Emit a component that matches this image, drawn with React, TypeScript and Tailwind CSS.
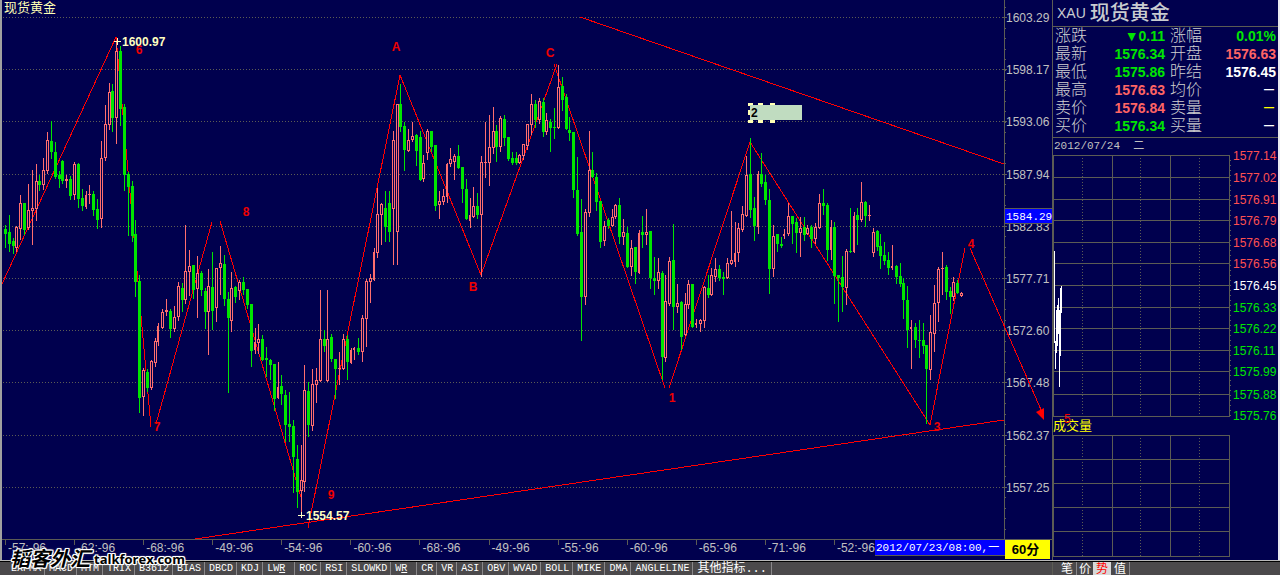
type Kind = 'up' | 'down' | 'fill';
type Candle = [x: number, high: number, top: number, bottom: number, low: number, kind: Kind];

const CANDLES: Candle[] = [
  [5, 225, 229, 234, 247, 'down'], [9, 215, 232, 244, 251, 'down'], [13, 238, 241, 246, 253, 'down'],
  [16, 226, 227, 248, 251, 'up'], [20, 195, 203, 229, 239, 'up'], [24, 203, 203, 230, 234, 'down'],
  [28, 184, 210, 228, 229, 'up'], [32, 170, 208, 211, 244, 'up'], [36, 164, 181, 209, 220, 'up'],
  [39, 175, 181, 185, 190, 'down'], [43, 158, 170, 185, 189, 'up'], [47, 132, 140, 171, 173, 'up'],
  [51, 121, 141, 152, 158, 'down'], [55, 142, 152, 177, 178, 'down'], [59, 171, 175, 179, 187, 'down'],
  [62, 160, 161, 181, 183, 'down'], [66, 175, 179, 181, 187, 'up'], [70, 176, 179, 196, 199, 'down'],
  [74, 162, 164, 195, 199, 'up'], [78, 163, 164, 199, 207, 'down'], [82, 189, 198, 206, 210, 'down'],
  [86, 191, 195, 207, 208, 'fill'], [89, 185, 194, 195, 203, 'up'], [93, 191, 194, 210, 215, 'down'],
  [97, 199, 209, 220, 228, 'down'], [101, 141, 158, 219, 227, 'up'], [105, 105, 124, 158, 160, 'up'],
  [109, 83, 92, 125, 129, 'up'], [112, 84, 91, 118, 131, 'down'], [116, 41, 51, 118, 143, 'up'],
  [120, 46, 51, 109, 125, 'down'], [124, 104, 107, 175, 190, 'down'], [128, 172, 174, 187, 235, 'down'],
  [132, 181, 186, 236, 241, 'down'], [135, 220, 234, 282, 296, 'down'], [139, 275, 281, 398, 412, 'down'],
  [143, 368, 370, 397, 415, 'up'], [147, 369, 372, 388, 391, 'down'], [151, 360, 361, 388, 389, 'up'],
  [155, 338, 341, 363, 366, 'up'], [158, 323, 326, 342, 345, 'fill'], [162, 309, 312, 328, 328, 'up'],
  [166, 299, 310, 312, 315, 'up'], [170, 309, 311, 329, 337, 'down'], [174, 306, 317, 329, 331, 'up'],
  [178, 282, 286, 317, 320, 'up'], [182, 283, 288, 300, 311, 'down'], [185, 225, 271, 300, 303, 'up'],
  [189, 250, 266, 272, 295, 'up'], [193, 265, 265, 290, 298, 'down'], [197, 256, 273, 289, 317, 'up'],
  [201, 271, 273, 290, 295, 'down'], [205, 288, 291, 312, 328, 'down'], [208, 269, 286, 312, 354, 'up'],
  [212, 252, 287, 311, 329, 'down'], [216, 268, 268, 308, 321, 'up'], [220, 246, 263, 268, 294, 'up'],
  [224, 255, 264, 299, 305, 'down'], [228, 292, 299, 318, 392, 'down'], [231, 272, 288, 321, 331, 'up'],
  [235, 286, 287, 297, 302, 'down'], [239, 280, 282, 291, 299, 'up'], [243, 277, 282, 290, 294, 'down'],
  [247, 289, 289, 305, 308, 'down'], [251, 304, 304, 351, 366, 'down'], [255, 328, 342, 350, 353, 'fill'],
  [258, 324, 339, 343, 353, 'up'], [262, 335, 339, 360, 360, 'down'], [266, 347, 358, 360, 376, 'down'],
  [270, 359, 360, 365, 379, 'down'], [274, 364, 364, 399, 410, 'down'], [278, 362, 387, 398, 398, 'fill'],
  [281, 375, 386, 394, 404, 'down'], [285, 390, 395, 425, 441, 'down'], [289, 392, 424, 427, 441, 'down'],
  [293, 420, 426, 457, 492, 'down'], [297, 445, 459, 492, 507, 'down'], [301, 445, 480, 491, 515, 'up'],
  [304, 365, 390, 482, 491, 'up'], [308, 382, 391, 425, 436, 'down'], [312, 369, 384, 426, 430, 'up'],
  [316, 368, 380, 385, 402, 'up'], [320, 290, 339, 381, 381, 'up'], [324, 330, 339, 346, 351, 'down'],
  [327, 290, 339, 381, 381, 'up'], [331, 334, 337, 359, 361, 'down'], [335, 359, 359, 369, 398, 'down'],
  [339, 352, 368, 369, 384, 'up'], [343, 334, 339, 369, 369, 'up'], [347, 335, 339, 362, 379, 'down'],
  [351, 348, 350, 363, 363, 'fill'], [354, 347, 348, 350, 359, 'fill'], [358, 338, 348, 352, 354, 'down'],
  [362, 315, 318, 352, 361, 'up'], [366, 279, 281, 319, 346, 'up'], [370, 274, 278, 282, 302, 'up'],
  [374, 248, 252, 280, 280, 'fill'], [377, 188, 214, 253, 257, 'up'], [381, 203, 204, 215, 244, 'up'],
  [385, 191, 208, 227, 241, 'down'], [389, 191, 203, 232, 241, 'down'], [393, 131, 140, 209, 264, 'up'],
  [397, 104, 104, 232, 264, 'up'], [400, 84, 104, 127, 131, 'down'], [404, 122, 126, 150, 170, 'down'],
  [408, 129, 140, 151, 151, 'up'], [412, 122, 136, 140, 141, 'up'], [416, 134, 135, 151, 165, 'down'],
  [420, 131, 137, 180, 180, 'down'], [423, 155, 163, 179, 181, 'up'], [427, 129, 131, 153, 159, 'up'],
  [431, 131, 131, 147, 151, 'down'], [435, 145, 145, 206, 210, 'down'], [439, 191, 201, 205, 218, 'up'],
  [443, 189, 196, 202, 204, 'up'], [447, 163, 164, 197, 202, 'fill'], [450, 148, 159, 164, 166, 'up'],
  [454, 154, 156, 162, 179, 'up'], [458, 145, 156, 168, 168, 'down'], [462, 167, 167, 189, 202, 'down'],
  [466, 179, 189, 219, 219, 'down'], [470, 198, 215, 221, 227, 'fill'], [473, 187, 206, 217, 217, 'up'],
  [477, 193, 206, 215, 218, 'down'], [481, 156, 162, 215, 276, 'up'], [485, 122, 162, 163, 177, 'up'],
  [489, 115, 147, 163, 185, 'up'], [493, 107, 131, 148, 153, 'up'], [496, 125, 131, 147, 161, 'down'],
  [500, 116, 118, 147, 151, 'up'], [504, 115, 119, 138, 145, 'down'], [508, 137, 137, 159, 160, 'down'],
  [512, 152, 158, 163, 164, 'down'], [516, 152, 158, 163, 164, 'down'], [519, 154, 155, 163, 163, 'up'],
  [523, 144, 144, 156, 159, 'up'], [527, 124, 124, 146, 149, 'up'], [531, 94, 104, 125, 134, 'up'],
  [535, 100, 104, 120, 127, 'down'], [539, 98, 101, 120, 123, 'up'], [543, 98, 102, 132, 136, 'down'],
  [546, 113, 120, 132, 134, 'up'], [550, 119, 122, 128, 151, 'down'], [554, 108, 127, 128, 138, 'down'],
  [558, 65, 87, 128, 128, 'up'], [562, 77, 86, 100, 110, 'down'], [566, 94, 97, 129, 129, 'down'],
  [569, 117, 130, 133, 140, 'down'], [573, 132, 132, 190, 197, 'down'], [577, 157, 190, 234, 235, 'down'],
  [581, 199, 232, 297, 340, 'down'], [585, 209, 212, 297, 304, 'up'], [589, 131, 170, 213, 216, 'up'],
  [592, 152, 170, 177, 177, 'down'], [596, 173, 177, 202, 210, 'down'], [600, 201, 201, 242, 247, 'down'],
  [604, 221, 226, 241, 245, 'up'], [608, 218, 220, 226, 228, 'down'], [612, 209, 217, 226, 226, 'up'],
  [615, 204, 205, 217, 218, 'up'], [619, 198, 205, 237, 243, 'down'], [623, 219, 232, 237, 244, 'up'],
  [627, 227, 233, 267, 267, 'down'], [631, 240, 248, 267, 275, 'up'], [635, 247, 247, 272, 283, 'down'],
  [639, 230, 233, 273, 273, 'fill'], [642, 216, 232, 235, 247, 'down'], [646, 209, 232, 235, 244, 'up'],
  [650, 231, 231, 278, 288, 'down'], [654, 257, 278, 281, 294, 'down'], [658, 258, 272, 281, 288, 'up'],
  [662, 271, 273, 357, 379, 'down'], [665, 275, 301, 358, 361, 'up'], [669, 257, 261, 304, 305, 'up'],
  [673, 224, 260, 307, 329, 'down'], [677, 284, 303, 307, 312, 'up'], [681, 301, 302, 337, 349, 'down'],
  [685, 293, 304, 335, 335, 'up'], [688, 280, 284, 305, 308, 'up'], [692, 284, 284, 327, 327, 'down'],
  [696, 319, 323, 325, 327, 'fill'], [700, 319, 320, 324, 331, 'up'], [704, 286, 287, 321, 327, 'up'],
  [708, 275, 288, 295, 297, 'down'], [711, 268, 275, 295, 295, 'up'], [715, 258, 269, 277, 281, 'up'],
  [719, 265, 269, 278, 280, 'down'], [723, 272, 277, 279, 294, 'down'], [727, 258, 263, 278, 278, 'up'],
  [731, 211, 260, 264, 264, 'up'], [735, 222, 253, 262, 266, 'fill'], [738, 223, 228, 253, 261, 'up'],
  [742, 206, 214, 230, 231, 'up'], [746, 156, 175, 216, 216, 'up'], [750, 138, 174, 210, 217, 'down'],
  [754, 197, 208, 226, 240, 'down'], [758, 171, 174, 227, 233, 'fill'], [761, 153, 174, 184, 186, 'down'],
  [765, 175, 182, 200, 204, 'down'], [769, 189, 200, 269, 293, 'down'], [773, 225, 236, 269, 276, 'up'],
  [777, 234, 234, 244, 251, 'down'], [781, 237, 244, 246, 247, 'down'], [784, 229, 234, 236, 238, 'fill'],
  [788, 203, 216, 234, 235, 'up'], [792, 216, 216, 224, 243, 'down'], [796, 218, 222, 233, 252, 'down'],
  [800, 217, 228, 233, 256, 'up'], [804, 217, 227, 235, 240, 'down'], [807, 225, 228, 234, 234, 'up'],
  [811, 225, 227, 239, 247, 'down'], [815, 223, 227, 239, 243, 'up'], [819, 194, 203, 228, 228, 'up'],
  [823, 189, 203, 206, 214, 'down'], [827, 203, 205, 250, 260, 'down'], [831, 220, 227, 250, 259, 'fill'],
  [834, 222, 227, 276, 303, 'down'], [838, 275, 275, 278, 321, 'down'], [842, 256, 277, 287, 311, 'down'],
  [846, 249, 251, 288, 304, 'up'], [850, 208, 251, 252, 252, 'down'], [854, 212, 216, 252, 252, 'fill'],
  [857, 208, 215, 220, 244, 'down'], [861, 182, 202, 220, 221, 'up'], [865, 201, 202, 216, 226, 'down'],
  [869, 205, 215, 216, 220, 'up'], [873, 228, 232, 253, 256, 'up'], [877, 230, 231, 247, 250, 'down'],
  [880, 234, 246, 256, 268, 'down'], [884, 242, 255, 261, 264, 'down'], [888, 252, 260, 268, 274, 'down'],
  [892, 245, 266, 268, 269, 'fill'], [896, 265, 266, 277, 283, 'down'], [900, 263, 276, 284, 286, 'down'],
  [903, 278, 283, 300, 318, 'down'], [907, 286, 300, 330, 347, 'down'], [911, 320, 327, 329, 368, 'fill'],
  [915, 323, 327, 340, 347, 'down'], [919, 320, 340, 341, 357, 'down'], [923, 323, 340, 346, 353, 'down'],
  [926, 345, 345, 369, 423, 'down'], [930, 315, 332, 370, 379, 'up'], [934, 285, 303, 334, 351, 'up'],
  [938, 267, 269, 303, 321, 'up'], [942, 252, 268, 269, 294, 'up'], [946, 265, 267, 292, 299, 'down'],
  [950, 287, 291, 297, 313, 'down'], [953, 277, 282, 297, 300, 'up'], [957, 280, 283, 293, 293, 'down'],
  [961, 292, 293, 296, 296, 'up'],
];

const PRICE_LEVELS = [
  { y: 17, label: '1603.29' },
  { y: 69, label: '1598.17' },
  { y: 121, label: '1593.06' },
  { y: 174, label: '1587.94' },
  { y: 226, label: '1582.83' },
  { y: 278, label: '1577.71' },
  { y: 330, label: '1572.60' },
  { y: 382, label: '1567.48' },
  { y: 435, label: '1562.37' },
  { y: 487, label: '1557.25' },
];

const WAVE_LINES = [
  '2,284 116,37 151,427',
  '156,424 212,222',
  '220,221 301,497',
  '308,528 400,75 481,275 557,64',
  '554,64 665,388',
  '669,388 750,142 930,425 965,248',
  '970,248 1042,412',
];

const TREND_LINES = ['195,539 1004,420', '580,17 1004,164'];

const WAVE_LABELS = [
  { x: 139, y: 54, text: '6' },
  { x: 157, y: 431, text: '7' },
  { x: 246, y: 216, text: '8' },
  { x: 331, y: 499, text: '9' },
  { x: 396, y: 51, text: 'A' },
  { x: 473, y: 291, text: 'B' },
  { x: 550, y: 57, text: 'C' },
  { x: 672, y: 402, text: '1' },
  { x: 937, y: 431, text: '3' },
  { x: 971, y: 248, text: '4' },
];

const HANDLES = [
  [748, 103], [758, 103], [770, 103],
  [748, 120], [758, 120], [770, 120],
];

const TIMES = [
  '-57:-96', '-62:-96', '-68:-96', '-49:-96', '-54:-96', '-60:-96', '-68:-96',
  '-49:-96', '-55:-96', '-60:-96', '-65:-96', '-71:-96', '-52:-96',
];

const QUOTES = [
  { a: '涨跌', av: '▼0.11', ac: 'text-[#00e600]', b: '涨幅', bv: '0.01%', bc: 'text-[#00e600]' },
  { a: '最新', av: '1576.34', ac: 'text-[#00e600]', b: '开盘', bv: '1576.63', bc: 'text-[#ff6464]' },
  { a: '最低', av: '1575.86', ac: 'text-[#00e600]', b: '昨结', bv: '1576.45', bc: 'text-white' },
  { a: '最高', av: '1576.63', ac: 'text-[#ff6464]', b: '均价', bv: '—', bc: 'text-white' },
  { a: '卖价', av: '1576.84', ac: 'text-[#ff6464]', b: '卖量', bv: '—', bc: 'text-[#ffff00]' },
  { a: '买价', av: '1576.34', ac: 'text-[#00e600]', b: '买量', bv: '—', bc: 'text-white' },
];

const TICK_LEVELS = [
  { y: 155, label: '1577.14', color: '#ff5050' },
  { y: 177, label: '1577.02', color: '#ff5050' },
  { y: 199, label: '1576.91', color: '#ff5050' },
  { y: 220, label: '1576.79', color: '#ff5050' },
  { y: 242, label: '1576.68', color: '#ff5050' },
  { y: 263, label: '1576.56', color: '#ff5050' },
  { y: 285, label: '1576.45', color: '#ffffff' },
  { y: 307, label: '1576.33', color: '#00e600' },
  { y: 328, label: '1576.22', color: '#00e600' },
  { y: 350, label: '1576.11', color: '#00e600' },
  { y: 371, label: '1575.99', color: '#00e600' },
  { y: 394, label: '1575.88', color: '#00e600' },
  { y: 415, label: '1575.76', color: '#00e600' },
];

// x, top, bottom of each one pixel column of the tick line
const TICKS = [
  [1054, 251, 343], [1055, 341, 369], [1056, 310, 353], [1057, 305, 346],
  [1058, 298, 334], [1059, 310, 387], [1060, 288, 356], [1061, 286, 313],
];

const INDICATORS = [
  'EXPMA', 'MACD', 'MTM', 'TRIX', 'B3612', 'BIAS', 'DBCD', 'KDJ', 'LW&R', 'ROC', 'RSI', 'SLOWKD',
  'W&R', 'CR', 'VR', 'ASI', 'OBV', 'WVAD', 'BOLL', 'MIKE', 'DMA', 'ANGLELINE',
];

const GRID = '#5c5c54';
const SANS = '"Liberation Sans", "Noto Sans CJK SC", sans-serif';
const MONO = '"Liberation Mono", "Noto Sans CJK SC", monospace';

function CandleMark({ candle }: { candle: Candle }) {
  const [x, high, top, bottom, low, kind] = candle;
  const color = kind === 'down' ? '#00e600' : '#ff6e6e';
  const height = Math.max(bottom - top, 1);

  return (
    <g>
      <rect x={x} y={high} width={1} height={low - high + 1} fill={color} />
      {kind === 'up' && height > 2 ? (
        <rect x={x - 0.5} y={top + 0.5} width={2} height={height - 1} fill="#00004e" stroke={color} />
      ) : (
        <rect x={x - 1} y={top} width={kind === 'fill' ? 2 : 3} height={height} fill={color} />
      )}
    </g>
  );
}

function PriceChart() {
  return (
    <svg viewBox="2 0 1050 540" className="block w-full" role="img" aria-label="现货黄金 60分">
      <g shapeRendering="crispEdges">
        {PRICE_LEVELS.map(({ y }) => (
          <g key={y} stroke={GRID}>
            <line x1={3} x2={1004} y1={y + 0.5} y2={y + 0.5} strokeDasharray="1 2" />
            <line x1={1002} x2={1007} y1={y + 0.5} y2={y + 0.5} />
          </g>
        ))}
        {Array.from({ length: 51 }, (_, i) => (
          <rect key={i} x={1005} y={Math.round(7 + i * 10.43)} width={1} height={1} fill={GRID} />
        ))}
        <path d="M1004.5 0V540M2 539.5H1052" stroke={GRID} fill="none" />
      </g>

      {PRICE_LEVELS.map(({ y, label }) => (
        <text key={y} x={1006} y={y + 5} fontSize={12} fontFamily={SANS} fill="#c0c0c0">
          {label}
        </text>
      ))}

      {/* Waves and trend channel */}
      <g fill="none" stroke="#ff0000" shapeRendering="crispEdges">
        {WAVE_LINES.map((points) => (
          <polyline key={points} points={points} />
        ))}
      </g>

      <g shapeRendering="crispEdges">
        {CANDLES.map((candle) => (
          <CandleMark key={candle[0]} candle={candle} />
        ))}
      </g>

      <g fill="none" stroke="#ff0000" shapeRendering="crispEdges">
        {TREND_LINES.map((points) => (
          <polyline key={points} points={points} />
        ))}
      </g>
      <polygon points="1036,412 1044,408 1044,420" fill="#ff0000" />

      <g fontSize={12} fontWeight="bold" fontFamily={SANS} fill="#f00000" textAnchor="middle">
        {WAVE_LABELS.map(({ x, y, text }) => (
          <text key={text} x={x} y={y}>
            {text}
          </text>
        ))}
      </g>

      {/* High and low of the visible range */}
      <path d="M114 41.5H121M117.5 38V45M298 515.5H305M301.5 512V518" stroke="#ffffc0" shapeRendering="crispEdges" />
      <g fontSize={12} fontWeight="bold" fontFamily={SANS} fill="#ffffc0">
        <text x={122} y={46}>1600.97</text>
        <text x={306} y={520}>1554.57</text>
      </g>

      {/* Wave label being edited */}
      <g fill="#ffffb4" shapeRendering="crispEdges">
        {HANDLES.map(([x, y]) => (
          <rect key={`${x}-${y}`} x={x} y={y} width={5} height={3} />
        ))}
        <rect x={748} y={110} width={5} height={5} />
      </g>
      <foreignObject x={750} y={105} width={52} height={15}>
        <input
          aria-label="标注"
          defaultValue="2"
          className="block h-[15px] w-full bg-[#c0dcc0] px-px text-xs font-bold leading-none text-black outline-none"
        />
      </foreignObject>

      <rect x={1005} y={208} width={47} height={16} fill={GRID} />
      <rect x={1005} y={209} width={47} height={14} fill="#0000ff" />
      <text x={1006} y={220} fontSize={11} fontFamily={MONO} fill="#ffffff">
        1584.29
      </text>
    </svg>
  );
}

function TimeAxis() {
  return (
    <div className="flex h-5 items-start">
      <div className="grid flex-1 grid-cols-[repeat(12,69fr)_41fr] pl-[3px]">
        {TIMES.map((time, i) => (
          <span key={i} className="relative overflow-hidden pl-[3px] text-xs leading-4 text-[#c0c0c0]">
            <i className="absolute left-0 top-0 h-[5px] w-px bg-[#5c5c54]" />
            {time}
          </span>
        ))}
      </div>
      <span className="h-4 w-[130px] overflow-hidden whitespace-nowrap border-b border-[#5c5c54] bg-[#0000ff] px-px font-[Liberation_Mono,Noto_Sans_CJK_SC,monospace] text-[11px] leading-4 text-white">
        2012/07/23/08:00,一
      </span>
      <button className="mr-0.5 h-[19px] w-[45px] bg-[#ffff00] pr-1 text-[13px] font-bold leading-[19px] text-black">
        60分
      </button>
    </div>
  );
}

function GridBox({ top, lines }: { top: number; lines: number[] }) {
  const bottom = lines[lines.length - 1];
  return (
    <g stroke={GRID} fill="none" shapeRendering="crispEdges">
      {lines.map((y) => (
        <line key={y} x1={1053} x2={1229} y1={y + 0.5} y2={y + 0.5} />
      ))}
      {[1053, 1112, 1170, 1229].map((x) => (
        <line key={x} x1={x + 0.5} x2={x + 0.5} y1={top} y2={bottom + 1} />
      ))}
      {[1082, 1140, 1199].map((x) => (
        <line key={x} x1={x + 0.5} x2={x + 0.5} y1={top} y2={bottom} strokeDasharray="1 2" />
      ))}
    </g>
  );
}

function QuotePanel() {
  return (
    <aside className="w-[228px] shrink-0 border-l border-r-2 border-l-[#5c5c54] border-r-[#e8e8f0]">
      <h1 className="flex h-[27px] items-center gap-1 border-b border-[#5c5c54] pl-1 text-[#c8ccd0]">
        <span className="text-sm">XAU</span>
        <span className="text-xl font-medium leading-6">现货黄金</span>
      </h1>

      <div className="border-b border-[#5c5c54] pb-0.5">
        <table className="w-full table-fixed border-collapse">
          <colgroup>
            <col className="w-[36px]" />
            <col className="w-[76px]" />
            <col className="w-[40px]" />
            <col />
          </colgroup>
          <tbody>
            {QUOTES.map((q) => (
              <tr key={q.a} className="h-[18px] text-sm leading-[18px]">
                <th className="whitespace-nowrap p-0 pl-0.5 text-left text-base font-light leading-[18px] text-[#d0d0d0]">{q.a}</th>
                <td className={`p-0 text-right font-bold leading-[18px] ${q.ac}`}>{q.av}</td>
                <th className="whitespace-nowrap p-0 pl-[5px] text-left text-base font-light leading-[18px] text-[#d0d0d0]">{q.b}</th>
                <td className={`p-0 pr-0.5 text-right font-bold leading-[18px] ${q.bc}`}>
                  {q.bv === '—' ? <span className="block pr-0.5 text-[10px] leading-[18px]">—</span> : q.bv}
                </td>
              </tr>
            ))}
          </tbody>
        </table>
      </div>

      <p className="h-[17px] whitespace-pre pl-px font-[Liberation_Mono,Noto_Sans_CJK_SC,monospace] text-[11px] leading-[17px] text-[#c0c0c0]">
        2012/07/24  二
      </p>

      <svg viewBox="1053 155 225 262" className="block w-full overflow-visible" role="img" aria-label="分时走势">
        <GridBox top={155} lines={[155, 177, 199, 220, 242, 263, 285, 307, 328, 350, 371, 394, 416]} />
        <line x1={1230.5} x2={1230.5} y1={160} y2={416} stroke={GRID} strokeDasharray="1 4" shapeRendering="crispEdges" />
        {TICKS.map(([x, top, bottom]) => (
          <rect key={x} x={x} y={top} width={1} height={bottom - top} fill="#ffffff" />
        ))}
        {TICK_LEVELS.map(({ y, label, color }) => (
          <text key={y} x={1233} y={y + 5} fontSize={12} fontFamily={SANS} fill={color}>
            {label}
          </text>
        ))}
      </svg>

      <h2 className="relative h-[18px] text-[13px] leading-[18px] text-[#ffff00]">
        成交量
        <span className="absolute -top-1 left-[11px] text-xs leading-3 text-[#f00000]">5</span>
      </h2>
      <svg viewBox="1053 435 225 122" className="block w-full" role="img" aria-label="成交量">
        <GridBox top={435} lines={[435, 459, 483, 507, 531, 556]} />
      </svg>
    </aside>
  );
}

function IndicatorBar() {
  return (
    <footer className="flex h-[13px] bg-[#4b494b] text-white">
      <div className="flex min-w-0 flex-1 pl-[7px] font-[Liberation_Mono,Noto_Sans_CJK_SC,monospace] text-[10px] leading-3">
        {INDICATORS.map((name) => {
          const [head, hot] = name.split('&');
          return (
            <button key={name} className="shrink-0 whitespace-pre border-r border-[#8a888a] pl-1 pr-[3px]">
              {head}
              {hot && (
                <>
                  <u>{hot}</u>{' '}
                </>
              )}
            </button>
          );
        })}
        <button className="shrink-0 whitespace-pre border-r border-[#8a888a] pl-1 pr-1 text-xs leading-3">其他指标...</button>
      </div>
      <div className="flex w-[228px] shrink-0 border-l border-[#5c5c54] pl-[5px] text-xs leading-3">
        <button className="border-r border-[#8a888a] px-[3px]">笔</button>
        <button className="px-0.5">价</button>
        <button className="bg-[#d8d8d8] px-[3px] text-[#ff0000]">势</button>
        <button className="border-r border-[#8a888a] px-[3px]">值</button>
      </div>
    </footer>
  );
}

export default function App() {
  return (
    <div className="relative bg-[#00004e] font-[Liberation_Sans,Noto_Sans_CJK_SC,sans-serif]">
      <main className="flex border-b border-[#b8b8b8]">
        <section className="relative min-w-0 flex-1 border-l-2 border-[#a0a0a0]">
          <span className="absolute left-0.5 top-0 text-[13px] leading-[15px] text-[#ffffb4]">现货黄金</span>
          <PriceChart />
          <TimeAxis />
        </section>
        <QuotePanel />
      </main>
      <div className="h-px bg-black" />
      <IndicatorBar />

      {/* Site mark */}
      <a
        href="#"
        className="absolute bottom-1 left-2.5 flex items-center gap-1 text-black [text-shadow:1px_0_#fff,-1px_0_#fff,0_1px_#fff,0_-1px_#fff,1px_1px_#fff,-1px_-1px_#fff,1px_-1px_#fff,-1px_1px_#fff,0_0_3px_#fff]"
      >
        <span className="text-xl font-bold italic leading-6">韬客外汇</span>
        <span className="font-[Open_Sans,sans-serif] text-[13px] font-bold leading-5">talkforex.com</span>
      </a>
    </div>
  );
}
